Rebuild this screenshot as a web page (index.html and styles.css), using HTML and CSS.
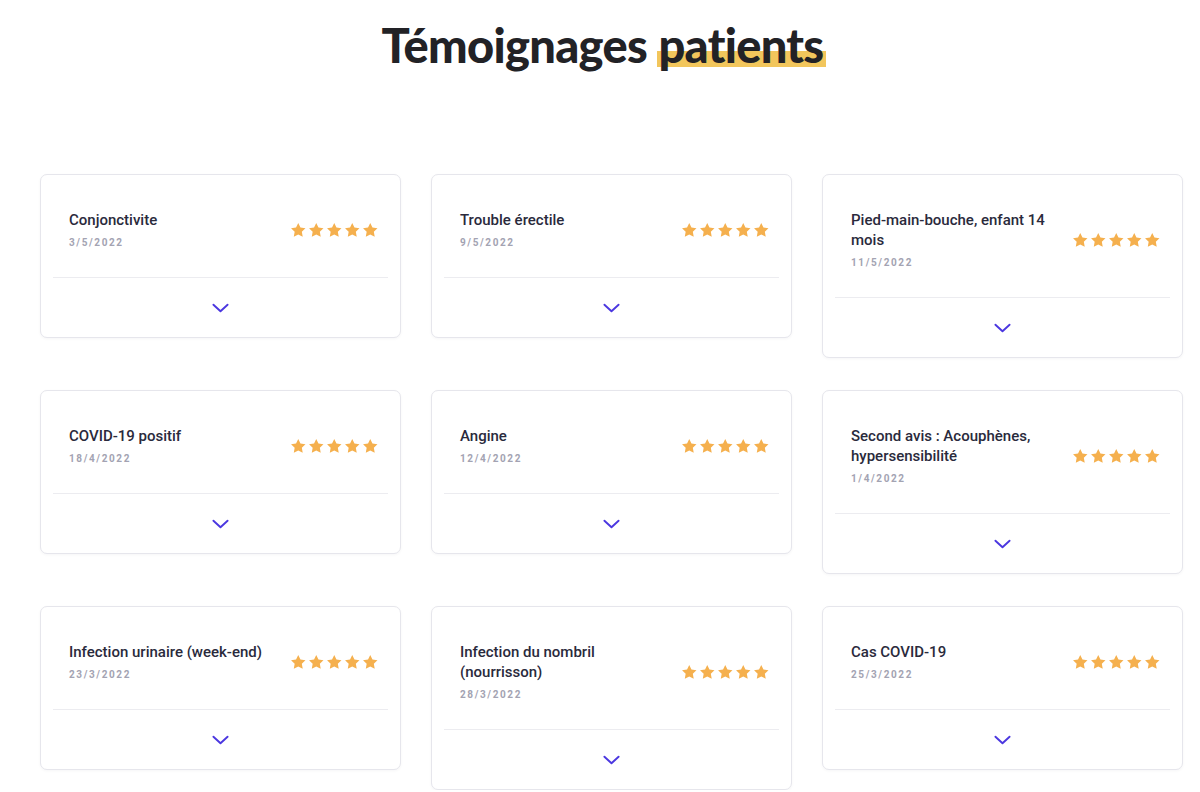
FILE: index.html
```html
<!DOCTYPE html>
<html lang="fr">
<head>
<meta charset="utf-8">
<title>Témoignages patients</title>
<link rel="stylesheet" href="styles.css">
</head>
<body>
<h1 class="heading">Témoignages <span class="mark">patients</span></h1>
<div class="grid">
  <div class="card"><div class="head"><div class="info"><div class="title">Conjonctivite</div><div class="date">3/5/2022</div></div><div class="stars"><svg viewBox="0 0 24 24"><path d="M12 1.5l3.2 6.6 7.3 1-5.3 5.1 1.3 7.2L12 18l-6.5 3.4 1.3-7.2-5.3-5.1 7.3-1z"/></svg><svg viewBox="0 0 24 24"><path d="M12 1.5l3.2 6.6 7.3 1-5.3 5.1 1.3 7.2L12 18l-6.5 3.4 1.3-7.2-5.3-5.1 7.3-1z"/></svg><svg viewBox="0 0 24 24"><path d="M12 1.5l3.2 6.6 7.3 1-5.3 5.1 1.3 7.2L12 18l-6.5 3.4 1.3-7.2-5.3-5.1 7.3-1z"/></svg><svg viewBox="0 0 24 24"><path d="M12 1.5l3.2 6.6 7.3 1-5.3 5.1 1.3 7.2L12 18l-6.5 3.4 1.3-7.2-5.3-5.1 7.3-1z"/></svg><svg viewBox="0 0 24 24"><path d="M12 1.5l3.2 6.6 7.3 1-5.3 5.1 1.3 7.2L12 18l-6.5 3.4 1.3-7.2-5.3-5.1 7.3-1z"/></svg></div></div><div class="foot"><svg class="chev" viewBox="0 0 18 10"><polyline points="1.5,1.5 9,8.5 16.5,1.5"/></svg></div></div>

  <div class="card"><div class="head"><div class="info"><div class="title">Trouble érectile</div><div class="date">9/5/2022</div></div><div class="stars"><svg viewBox="0 0 24 24"><path d="M12 1.5l3.2 6.6 7.3 1-5.3 5.1 1.3 7.2L12 18l-6.5 3.4 1.3-7.2-5.3-5.1 7.3-1z"/></svg><svg viewBox="0 0 24 24"><path d="M12 1.5l3.2 6.6 7.3 1-5.3 5.1 1.3 7.2L12 18l-6.5 3.4 1.3-7.2-5.3-5.1 7.3-1z"/></svg><svg viewBox="0 0 24 24"><path d="M12 1.5l3.2 6.6 7.3 1-5.3 5.1 1.3 7.2L12 18l-6.5 3.4 1.3-7.2-5.3-5.1 7.3-1z"/></svg><svg viewBox="0 0 24 24"><path d="M12 1.5l3.2 6.6 7.3 1-5.3 5.1 1.3 7.2L12 18l-6.5 3.4 1.3-7.2-5.3-5.1 7.3-1z"/></svg><svg viewBox="0 0 24 24"><path d="M12 1.5l3.2 6.6 7.3 1-5.3 5.1 1.3 7.2L12 18l-6.5 3.4 1.3-7.2-5.3-5.1 7.3-1z"/></svg></div></div><div class="foot"><svg class="chev" viewBox="0 0 18 10"><polyline points="1.5,1.5 9,8.5 16.5,1.5"/></svg></div></div>

  <div class="card"><div class="head"><div class="info"><div class="title">Pied-main-bouche, enfant 14 mois</div><div class="date">11/5/2022</div></div><div class="stars"><svg viewBox="0 0 24 24"><path d="M12 1.5l3.2 6.6 7.3 1-5.3 5.1 1.3 7.2L12 18l-6.5 3.4 1.3-7.2-5.3-5.1 7.3-1z"/></svg><svg viewBox="0 0 24 24"><path d="M12 1.5l3.2 6.6 7.3 1-5.3 5.1 1.3 7.2L12 18l-6.5 3.4 1.3-7.2-5.3-5.1 7.3-1z"/></svg><svg viewBox="0 0 24 24"><path d="M12 1.5l3.2 6.6 7.3 1-5.3 5.1 1.3 7.2L12 18l-6.5 3.4 1.3-7.2-5.3-5.1 7.3-1z"/></svg><svg viewBox="0 0 24 24"><path d="M12 1.5l3.2 6.6 7.3 1-5.3 5.1 1.3 7.2L12 18l-6.5 3.4 1.3-7.2-5.3-5.1 7.3-1z"/></svg><svg viewBox="0 0 24 24"><path d="M12 1.5l3.2 6.6 7.3 1-5.3 5.1 1.3 7.2L12 18l-6.5 3.4 1.3-7.2-5.3-5.1 7.3-1z"/></svg></div></div><div class="foot"><svg class="chev" viewBox="0 0 18 10"><polyline points="1.5,1.5 9,8.5 16.5,1.5"/></svg></div></div>

  <div class="card"><div class="head"><div class="info"><div class="title">COVID-19 positif</div><div class="date">18/4/2022</div></div><div class="stars"><svg viewBox="0 0 24 24"><path d="M12 1.5l3.2 6.6 7.3 1-5.3 5.1 1.3 7.2L12 18l-6.5 3.4 1.3-7.2-5.3-5.1 7.3-1z"/></svg><svg viewBox="0 0 24 24"><path d="M12 1.5l3.2 6.6 7.3 1-5.3 5.1 1.3 7.2L12 18l-6.5 3.4 1.3-7.2-5.3-5.1 7.3-1z"/></svg><svg viewBox="0 0 24 24"><path d="M12 1.5l3.2 6.6 7.3 1-5.3 5.1 1.3 7.2L12 18l-6.5 3.4 1.3-7.2-5.3-5.1 7.3-1z"/></svg><svg viewBox="0 0 24 24"><path d="M12 1.5l3.2 6.6 7.3 1-5.3 5.1 1.3 7.2L12 18l-6.5 3.4 1.3-7.2-5.3-5.1 7.3-1z"/></svg><svg viewBox="0 0 24 24"><path d="M12 1.5l3.2 6.6 7.3 1-5.3 5.1 1.3 7.2L12 18l-6.5 3.4 1.3-7.2-5.3-5.1 7.3-1z"/></svg></div></div><div class="foot"><svg class="chev" viewBox="0 0 18 10"><polyline points="1.5,1.5 9,8.5 16.5,1.5"/></svg></div></div>

  <div class="card"><div class="head"><div class="info"><div class="title">Angine</div><div class="date">12/4/2022</div></div><div class="stars"><svg viewBox="0 0 24 24"><path d="M12 1.5l3.2 6.6 7.3 1-5.3 5.1 1.3 7.2L12 18l-6.5 3.4 1.3-7.2-5.3-5.1 7.3-1z"/></svg><svg viewBox="0 0 24 24"><path d="M12 1.5l3.2 6.6 7.3 1-5.3 5.1 1.3 7.2L12 18l-6.5 3.4 1.3-7.2-5.3-5.1 7.3-1z"/></svg><svg viewBox="0 0 24 24"><path d="M12 1.5l3.2 6.6 7.3 1-5.3 5.1 1.3 7.2L12 18l-6.5 3.4 1.3-7.2-5.3-5.1 7.3-1z"/></svg><svg viewBox="0 0 24 24"><path d="M12 1.5l3.2 6.6 7.3 1-5.3 5.1 1.3 7.2L12 18l-6.5 3.4 1.3-7.2-5.3-5.1 7.3-1z"/></svg><svg viewBox="0 0 24 24"><path d="M12 1.5l3.2 6.6 7.3 1-5.3 5.1 1.3 7.2L12 18l-6.5 3.4 1.3-7.2-5.3-5.1 7.3-1z"/></svg></div></div><div class="foot"><svg class="chev" viewBox="0 0 18 10"><polyline points="1.5,1.5 9,8.5 16.5,1.5"/></svg></div></div>

  <div class="card"><div class="head"><div class="info"><div class="title">Second avis : Acouphènes, hypersensibilité</div><div class="date">1/4/2022</div></div><div class="stars"><svg viewBox="0 0 24 24"><path d="M12 1.5l3.2 6.6 7.3 1-5.3 5.1 1.3 7.2L12 18l-6.5 3.4 1.3-7.2-5.3-5.1 7.3-1z"/></svg><svg viewBox="0 0 24 24"><path d="M12 1.5l3.2 6.6 7.3 1-5.3 5.1 1.3 7.2L12 18l-6.5 3.4 1.3-7.2-5.3-5.1 7.3-1z"/></svg><svg viewBox="0 0 24 24"><path d="M12 1.5l3.2 6.6 7.3 1-5.3 5.1 1.3 7.2L12 18l-6.5 3.4 1.3-7.2-5.3-5.1 7.3-1z"/></svg><svg viewBox="0 0 24 24"><path d="M12 1.5l3.2 6.6 7.3 1-5.3 5.1 1.3 7.2L12 18l-6.5 3.4 1.3-7.2-5.3-5.1 7.3-1z"/></svg><svg viewBox="0 0 24 24"><path d="M12 1.5l3.2 6.6 7.3 1-5.3 5.1 1.3 7.2L12 18l-6.5 3.4 1.3-7.2-5.3-5.1 7.3-1z"/></svg></div></div><div class="foot"><svg class="chev" viewBox="0 0 18 10"><polyline points="1.5,1.5 9,8.5 16.5,1.5"/></svg></div></div>

  <div class="card"><div class="head"><div class="info"><div class="title">Infection urinaire (week-end)</div><div class="date">23/3/2022</div></div><div class="stars"><svg viewBox="0 0 24 24"><path d="M12 1.5l3.2 6.6 7.3 1-5.3 5.1 1.3 7.2L12 18l-6.5 3.4 1.3-7.2-5.3-5.1 7.3-1z"/></svg><svg viewBox="0 0 24 24"><path d="M12 1.5l3.2 6.6 7.3 1-5.3 5.1 1.3 7.2L12 18l-6.5 3.4 1.3-7.2-5.3-5.1 7.3-1z"/></svg><svg viewBox="0 0 24 24"><path d="M12 1.5l3.2 6.6 7.3 1-5.3 5.1 1.3 7.2L12 18l-6.5 3.4 1.3-7.2-5.3-5.1 7.3-1z"/></svg><svg viewBox="0 0 24 24"><path d="M12 1.5l3.2 6.6 7.3 1-5.3 5.1 1.3 7.2L12 18l-6.5 3.4 1.3-7.2-5.3-5.1 7.3-1z"/></svg><svg viewBox="0 0 24 24"><path d="M12 1.5l3.2 6.6 7.3 1-5.3 5.1 1.3 7.2L12 18l-6.5 3.4 1.3-7.2-5.3-5.1 7.3-1z"/></svg></div></div><div class="foot"><svg class="chev" viewBox="0 0 18 10"><polyline points="1.5,1.5 9,8.5 16.5,1.5"/></svg></div></div>

  <div class="card"><div class="head"><div class="info"><div class="title">Infection du nombril (nourrisson)</div><div class="date">28/3/2022</div></div><div class="stars"><svg viewBox="0 0 24 24"><path d="M12 1.5l3.2 6.6 7.3 1-5.3 5.1 1.3 7.2L12 18l-6.5 3.4 1.3-7.2-5.3-5.1 7.3-1z"/></svg><svg viewBox="0 0 24 24"><path d="M12 1.5l3.2 6.6 7.3 1-5.3 5.1 1.3 7.2L12 18l-6.5 3.4 1.3-7.2-5.3-5.1 7.3-1z"/></svg><svg viewBox="0 0 24 24"><path d="M12 1.5l3.2 6.6 7.3 1-5.3 5.1 1.3 7.2L12 18l-6.5 3.4 1.3-7.2-5.3-5.1 7.3-1z"/></svg><svg viewBox="0 0 24 24"><path d="M12 1.5l3.2 6.6 7.3 1-5.3 5.1 1.3 7.2L12 18l-6.5 3.4 1.3-7.2-5.3-5.1 7.3-1z"/></svg><svg viewBox="0 0 24 24"><path d="M12 1.5l3.2 6.6 7.3 1-5.3 5.1 1.3 7.2L12 18l-6.5 3.4 1.3-7.2-5.3-5.1 7.3-1z"/></svg></div></div><div class="foot"><svg class="chev" viewBox="0 0 18 10"><polyline points="1.5,1.5 9,8.5 16.5,1.5"/></svg></div></div>

  <div class="card"><div class="head"><div class="info"><div class="title">Cas COVID-19</div><div class="date">25/3/2022</div></div><div class="stars"><svg viewBox="0 0 24 24"><path d="M12 1.5l3.2 6.6 7.3 1-5.3 5.1 1.3 7.2L12 18l-6.5 3.4 1.3-7.2-5.3-5.1 7.3-1z"/></svg><svg viewBox="0 0 24 24"><path d="M12 1.5l3.2 6.6 7.3 1-5.3 5.1 1.3 7.2L12 18l-6.5 3.4 1.3-7.2-5.3-5.1 7.3-1z"/></svg><svg viewBox="0 0 24 24"><path d="M12 1.5l3.2 6.6 7.3 1-5.3 5.1 1.3 7.2L12 18l-6.5 3.4 1.3-7.2-5.3-5.1 7.3-1z"/></svg><svg viewBox="0 0 24 24"><path d="M12 1.5l3.2 6.6 7.3 1-5.3 5.1 1.3 7.2L12 18l-6.5 3.4 1.3-7.2-5.3-5.1 7.3-1z"/></svg><svg viewBox="0 0 24 24"><path d="M12 1.5l3.2 6.6 7.3 1-5.3 5.1 1.3 7.2L12 18l-6.5 3.4 1.3-7.2-5.3-5.1 7.3-1z"/></svg></div></div><div class="foot"><svg class="chev" viewBox="0 0 18 10"><polyline points="1.5,1.5 9,8.5 16.5,1.5"/></svg></div></div>
</div>
</body>
</html>
```

FILE: styles.css
```css
* { box-sizing: border-box; }
html, body { margin: 0; padding: 0; background: #fff; }
body { font-family: Roboto, Inter, sans-serif; color: #2b2b3a; }

.heading {
  margin: 0;
  padding: 13px 0 0 8px;
  height: 174px;
  text-align: center;
  font-family: Lato, Inter, sans-serif;
  font-weight: 900;
  font-size: 47px;
  line-height: 64px;
  letter-spacing: -0.7px;
  color: #222226;
}
.mark {
  background: linear-gradient(to bottom, transparent 0, transparent 61%, #f2c65c 61%, #f2c65c 90%, transparent 90%);
  padding: 0 3px 0 1px;
}

.grid {
  margin-left: 40px;
  width: 1143px;
  display: grid;
  grid-template-columns: repeat(3, 361px);
  column-gap: 30px;
  row-gap: 32px;
  align-items: start;
}

.card {
  border: 1px solid #e6e6ec;
  border-radius: 7px;
  background: #fff;
  box-shadow: 0 1px 3px rgba(30, 30, 60, 0.04);
}
.head {
  margin: 0 12px;
  padding: 35px 10px 26px 16px;
  border-bottom: 1px solid #ececf0;
  display: flex;
  align-items: center;
  gap: 16px;
}
.info { flex: 1; min-width: 0; }
.title {
  font-size: 15px;
  font-weight: 500;
  line-height: 20px;
  color: #2a2a3c;
}
.date {
  margin-top: 5px;
  font-family: Roboto, Inter, sans-serif;
  font-size: 10px;
  font-weight: 700;
  line-height: 16px;
  letter-spacing: 1.6px;
  color: #a3a3b2;
}
.stars { display: flex; gap: 1.5px; flex: none; }
.stars svg { width: 16.5px; height: 16.5px; fill: #f5b04e; }

.foot {
  height: 59px;
  display: flex;
  align-items: center;
  justify-content: center;
}
.chev {
  width: 17px;
  height: 10px;
  fill: none;
  stroke: #4b37e0;
  stroke-width: 2;
  stroke-linecap: round;
  stroke-linejoin: round;
}
```
